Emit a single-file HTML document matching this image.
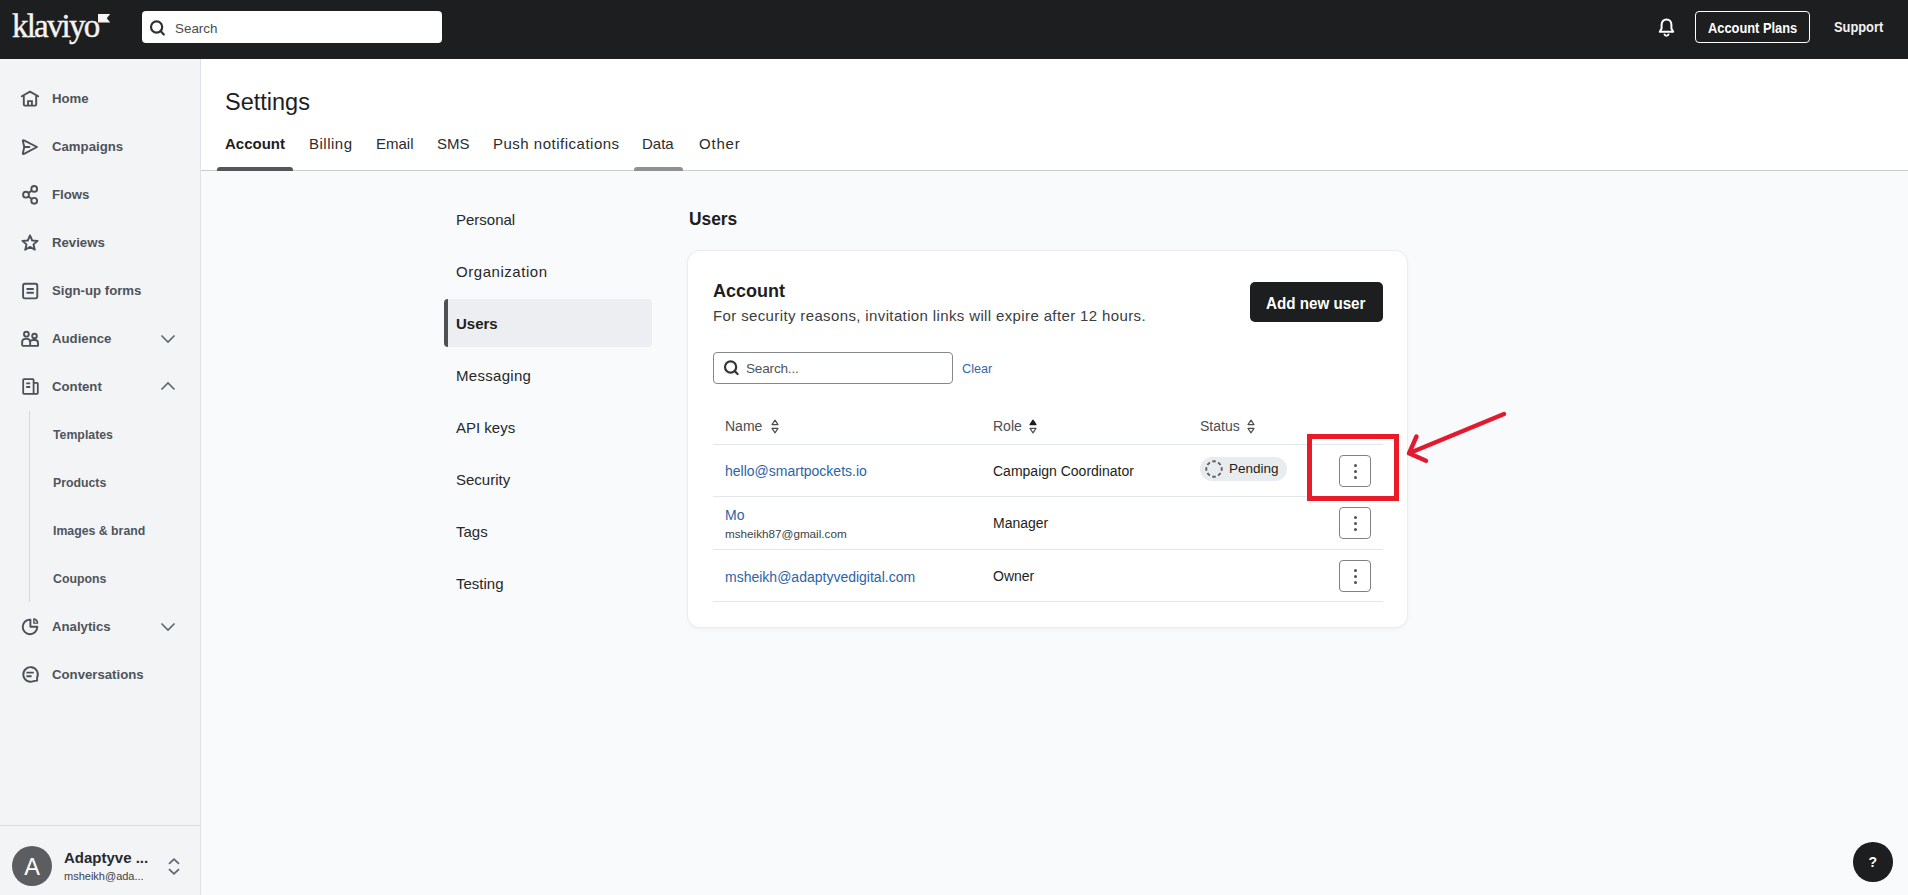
<!DOCTYPE html>
<html><head><meta charset="utf-8">
<style>
*{box-sizing:border-box;margin:0;padding:0}
html,body{width:1908px;height:895px;overflow:hidden;background:#f9fafb;font-family:"Liberation Sans",sans-serif;color:#1d1e20}
.abs{position:absolute}
#top{position:absolute;left:0;top:0;width:1908px;height:59px;background:#1d1e20}
#side{position:absolute;left:0;top:59px;width:201px;height:836px;background:#f3f4f6;border-right:1px solid #dfe1e5}
.nav{position:absolute;left:52px;font-size:13.2px;font-weight:bold;color:#4e535a;white-space:nowrap;line-height:17px}
.sub{position:absolute;left:53px;font-size:12.3px;font-weight:bold;color:#50555c;white-space:nowrap;line-height:16px}
.ico{position:absolute;left:20px;width:20px;height:20px}
#head{position:absolute;left:201px;top:59px;width:1707px;height:112px;background:#fff;border-bottom:1px solid #c9ccd1}
.tab{position:absolute;top:76px;font-size:15px;color:#2a2c2f;white-space:nowrap;line-height:18px}
.snav{position:absolute;left:456px;font-size:15px;color:#26282b;white-space:nowrap;line-height:18px}
.th{position:absolute;top:418px;font-size:14px;color:#4a4e55;line-height:16px;white-space:nowrap}
.hl{position:absolute;left:713px;width:670px;height:1px;background:#e3e6ea}
.td{position:absolute;font-size:14px;color:#1d1e20;line-height:16px;white-space:nowrap}
.link{color:#2c64a8}
.kb{position:absolute;left:1339px;width:32px;height:32px;border:1px solid #7f8185;border-radius:4px;background:#fff}
.kb i{position:absolute;left:13.5px;width:3.2px;height:3.2px;border-radius:50%;background:#505154}
</style></head>
<body>
<div id="top">
  <!-- logo -->
  <div class="abs" style="left:12px;top:6px;font-family:'Liberation Serif',serif;font-size:33px;color:#f6f4f0;letter-spacing:-1.8px;line-height:40px;font-weight:normal;-webkit-text-stroke:0.4px #f6f4f0">klaviyo</div>
  <svg class="abs" style="left:98px;top:13.5px" width="13" height="10" viewBox="0 0 13 10"><path d="M0 0H12.2L8.8 4.2L12.2 8.4H0Z" fill="#f6f4f0"/></svg>
  <!-- search -->
  <div class="abs" style="left:142px;top:11px;width:300px;height:32px;background:#fff;border-radius:4px"></div>
  <svg class="abs" style="left:148px;top:19px" width="18" height="18" viewBox="0 0 18 18"><circle cx="8.6" cy="8" r="5.6" fill="none" stroke="#2f3033" stroke-width="2.2"/><path d="M12.6 12L15.8 15.4" stroke="#2f3033" stroke-width="2.2" stroke-linecap="round"/></svg>
  <div class="abs" style="left:175px;top:21px;font-size:13.4px;color:#4a4d52;line-height:16px">Search</div>
  <!-- right -->
  <svg class="abs" style="left:1657px;top:17px" width="19" height="21" viewBox="0 0 19 21"><path d="M9.5 2.5C6.5 2.5 4.6 4.8 4.6 7.8V11.6L2.8 14.8H16.2L14.4 11.6V7.8C14.4 4.8 12.5 2.5 9.5 2.5Z" fill="none" stroke="#fff" stroke-width="2" stroke-linejoin="round"/><path d="M7.2 16.8C7.6 18.2 8.4 18.9 9.5 18.9S11.4 18.2 11.8 16.8" fill="none" stroke="#fff" stroke-width="1.8"/></svg>
  <div class="abs" style="left:1695px;top:11px;width:115px;height:32px;border:1.5px solid #fff;border-radius:4px"></div>
  <div class="abs" style="left:1708px;top:20px;font-size:14px;font-weight:bold;color:#fff;line-height:16px;white-space:nowrap;transform:scaleX(0.917);transform-origin:0 0">Account Plans</div>
  <div class="abs" style="left:1834px;top:18.5px;font-size:14px;font-weight:bold;color:#f2f2f2;line-height:16px;white-space:nowrap;transform:scaleX(0.918);transform-origin:0 0">Support</div>
</div>

<div id="side">
  <!-- home -->
  <svg class="abs" style="left:20px;top:30px" width="20" height="18" viewBox="0 0 20 18"><path d="M1.8 7.3L10 2.6L18.2 7.3M3.8 6.2V15.5Q3.8 16.6 4.9 16.6H15.1Q16.2 16.6 16.2 15.5V6.2" fill="none" stroke="#4c5057" stroke-width="1.9" stroke-linejoin="round" stroke-linecap="round"/><path d="M8.1 16.6V12.1H11.9V16.6" fill="none" stroke="#4c5057" stroke-width="1.9"/></svg>
  <div class="nav" style="top:31px">Home</div>
  <!-- campaigns -->
  <svg class="abs" style="left:20px;top:79px" width="20" height="19" viewBox="0 0 20 19"><path d="M4 2.4L17 9L4 15.8Q2.6 16.5 2.9 15L4.3 9L2.9 3.2Q2.6 1.7 4 2.4Z" fill="none" stroke="#4c5057" stroke-width="1.9" stroke-linejoin="round"/><path d="M4.3 9H9.4" stroke="#4c5057" stroke-width="1.9" stroke-linecap="round"/></svg>
  <div class="nav" style="top:79px">Campaigns</div>
  <!-- flows -->
  <svg class="abs" style="left:20px;top:124px" width="20" height="22" viewBox="0 0 20 22"><circle cx="14.2" cy="5.9" r="2.9" fill="none" stroke="#4c5057" stroke-width="1.9"/><circle cx="6" cy="11.7" r="2.9" fill="none" stroke="#4c5057" stroke-width="1.9"/><circle cx="14.2" cy="17.8" r="2.9" fill="none" stroke="#4c5057" stroke-width="1.9"/><path d="M8.4 10L11.8 7.6M8.4 13.4L11.8 16" stroke="#4c5057" stroke-width="1.9"/></svg>
  <div class="nav" style="top:127px">Flows</div>
  <!-- reviews -->
  <svg class="abs" style="left:20px;top:174px" width="20" height="20" viewBox="0 0 20 20"><path d="M10 2.4L12.2 7.5L17.6 7.9L13.5 11.4L14.8 16.7L10 13.9L5.2 16.7L6.5 11.4L2.4 7.9L7.8 7.5Z" fill="none" stroke="#4c5057" stroke-width="1.9" stroke-linejoin="round"/></svg>
  <div class="nav" style="top:175px">Reviews</div>
  <!-- signup forms -->
  <svg class="abs" style="left:20px;top:222px" width="20" height="19" viewBox="0 0 20 19"><rect x="3.1" y="2.8" width="14.2" height="14.6" rx="1.8" fill="none" stroke="#4c5057" stroke-width="1.9"/><path d="M6.5 8H13.8M6.5 11.8H13.8" stroke="#4c5057" stroke-width="1.9"/></svg>
  <div class="nav" style="top:223px">Sign-up forms</div>
  <!-- audience -->
  <svg class="abs" style="left:20px;top:270px" width="20" height="19" viewBox="0 0 20 19"><circle cx="6.4" cy="5.2" r="2.4" fill="none" stroke="#4c5057" stroke-width="1.9"/><circle cx="14.5" cy="7" r="2.3" fill="none" stroke="#4c5057" stroke-width="1.9"/><path d="M2.15 16.85H18.05V14.2Q18.05 11.05 14.9 11.05H13.3Q10.9 11.05 10.15 12.6M2.15 16.85V13Q2.15 9.85 5.3 9.85H7Q10.15 9.85 10.15 13V16.85" fill="none" stroke="#4c5057" stroke-width="1.9" stroke-linejoin="round"/></svg>
  <div class="nav" style="top:271px">Audience</div>
  <svg class="abs" style="left:160px;top:275px" width="16" height="10" viewBox="0 0 16 10"><path d="M1.5 1.5L8 8L14.5 1.5" fill="none" stroke="#5f6670" stroke-width="1.6"/></svg>
  <!-- content -->
  <svg class="abs" style="left:20px;top:318px" width="20" height="19" viewBox="0 0 20 19"><path d="M13.6 16.9H3.9Q3.2 16.9 3.2 16.1V2.9Q3.2 2.1 4 2.1H12.8Q13.6 2.1 13.6 2.9V16.9H17.1Q17.8 16.9 17.8 16.1V6.6Q17.8 5.8 17.1 5.8H13.6" fill="none" stroke="#4c5057" stroke-width="1.8" stroke-linejoin="round"/><path d="M6.2 6.3H10.2M6.2 10H10.2" stroke="#4c5057" stroke-width="1.8"/></svg>
  <div class="nav" style="top:319px">Content</div>
  <svg class="abs" style="left:160px;top:322px" width="16" height="10" viewBox="0 0 16 10"><path d="M1.5 8.5L8 2L14.5 8.5" fill="none" stroke="#5f6670" stroke-width="1.6"/></svg>
  <div class="abs" style="left:29px;top:352px;width:1px;height:191px;background:#d4d7db"></div>
  <div class="sub" style="top:368px">Templates</div>
  <div class="sub" style="top:416px">Products</div>
  <div class="sub" style="top:464px">Images &amp; brand</div>
  <div class="sub" style="top:512px">Coupons</div>
  <!-- analytics -->
  <svg class="abs" style="left:20px;top:558px" width="20" height="19" viewBox="0 0 20 19"><path d="M10.4 2.6A7.3 7.3 0 1 0 17.3 9.8H10.4Z" fill="none" stroke="#4c5057" stroke-width="1.9" stroke-linejoin="round"/><path d="M13.2 1.3V6.8H18.3Q18.3 1.3 13.2 1.3Z" fill="#4c5057"/><path d="M14.6 2.8V5.4H17" fill="#f3f4f6"/></svg>
  <div class="nav" style="top:559px">Analytics</div>
  <svg class="abs" style="left:160px;top:563px" width="16" height="10" viewBox="0 0 16 10"><path d="M1.5 1.5L8 8L14.5 1.5" fill="none" stroke="#5f6670" stroke-width="1.6"/></svg>
  <!-- conversations -->
  <svg class="abs" style="left:20px;top:606px" width="20" height="19" viewBox="0 0 20 19"><path d="M17.1 15.6L17.1 12.7A7.3 7.3 0 1 0 13.6 16.1Z" fill="none" stroke="#4c5057" stroke-width="1.9" stroke-linejoin="round"/><path d="M6.4 7.6H13.8M6.4 11.3H11.6" stroke="#4c5057" stroke-width="1.9"/></svg>
  <div class="nav" style="top:607px">Conversations</div>
  <!-- bottom account -->
  <div class="abs" style="left:0;top:766px;width:200px;height:1px;background:#d9dce0"></div>
  <div class="abs" style="left:12px;top:787px;width:40px;height:40px;border-radius:50%;background:#5c5d60;color:#fff;font-size:23.5px;line-height:42px;text-align:center">A</div>
  <div class="abs" style="left:64px;top:790px;font-size:15px;font-weight:bold;color:#26292e;line-height:18px;white-space:nowrap">Adaptyve ...</div>
  <div class="abs" style="left:64px;top:811px;font-size:11px;color:#3d4248;line-height:13px;white-space:nowrap">msheikh@ada...</div>
  <svg class="abs" style="left:166px;top:798px" width="16" height="22" viewBox="0 0 16 22"><path d="M3 6.8L8 2.2L13 6.8M3 12.2L8 16.8L13 12.2" fill="none" stroke="#5f6670" stroke-width="1.8"/></svg>
</div>

<div id="head">
  <div class="abs" style="left:24px;top:29px;font-size:23.5px;color:#1d1e20;line-height:28px">Settings</div>
  <div class="tab" style="left:24px;font-weight:bold;color:#1d1e20">Account</div>
  <div class="tab" style="left:108px;letter-spacing:0.5px">Billing</div>
  <div class="tab" style="left:175px">Email</div>
  <div class="tab" style="left:236px">SMS</div>
  <div class="tab" style="left:292px;letter-spacing:0.5px">Push notifications</div>
  <div class="tab" style="left:441px">Data</div>
  <div class="tab" style="left:498px;letter-spacing:0.8px">Other</div>
  <div class="abs" style="left:16px;top:108px;width:76px;height:4px;background:#555659;border-radius:3px 3px 0 0"></div>
  <div class="abs" style="left:433px;top:108px;width:49px;height:4px;background:#8f9091;border-radius:3px 3px 0 0"></div>
</div>
<!-- sub nav -->
<div class="snav" style="top:211px">Personal</div>
<div class="snav" style="top:263px;letter-spacing:0.55px">Organization</div>
<div class="abs" style="left:444px;top:299px;width:208px;height:48px;background:#eceef1;border-radius:4px;border-left:4px solid #4f5053"></div>
<div class="snav" style="top:315px;font-weight:bold;color:#1d1e20">Users</div>
<div class="snav" style="top:367px;letter-spacing:0.3px">Messaging</div>
<div class="snav" style="top:419px">API keys</div>
<div class="snav" style="top:471px">Security</div>
<div class="snav" style="top:523px">Tags</div>
<div class="snav" style="top:575px">Testing</div>

<div class="abs" style="left:689px;top:209px;font-size:18px;font-weight:bold;color:#1d1e20;line-height:20px;white-space:nowrap;transform:scaleX(0.965);transform-origin:0 0">Users</div>

<!-- card -->
<div class="abs" style="left:688px;top:251px;width:719px;height:376px;background:#fff;border-radius:12px;box-shadow:0 0 0 1px #eaecef,0 1px 2px rgba(0,0,0,0.05),0 2px 6px rgba(0,0,0,0.04)"></div>
<div class="abs" style="left:713px;top:280px;font-size:18px;font-weight:bold;color:#1d1e20;line-height:22px">Account</div>
<div class="abs" style="left:713px;top:307px;font-size:15px;color:#3a3d42;line-height:18px;white-space:nowrap;letter-spacing:0.37px">For security reasons, invitation links will expire after 12 hours.</div>
<div class="abs" style="left:1250px;top:282px;width:133px;height:40px;background:#1d1e20;border-radius:5px"></div>
<div class="abs" style="left:1266px;top:294.5px;font-size:16px;font-weight:bold;color:#fff;line-height:18px;white-space:nowrap;transform:scaleX(0.948);transform-origin:0 0">Add new user</div>

<div class="abs" style="left:713px;top:352px;width:240px;height:32px;border:1px solid #85888c;border-radius:4px;background:#fff"></div>
<svg class="abs" style="left:722px;top:359px" width="18" height="18" viewBox="0 0 18 18"><circle cx="8.6" cy="8" r="5.6" fill="none" stroke="#333438" stroke-width="2.2"/><path d="M12.6 12L15.6 15" stroke="#333438" stroke-width="2.2" stroke-linecap="round"/></svg>
<div class="abs" style="left:746px;top:361px;font-size:13.6px;color:#50545a;line-height:16px;letter-spacing:-0.2px">Search...</div>
<div class="abs" style="left:962px;top:361px;font-size:12.7px;color:#2f6aae;line-height:16px">Clear</div>

<!-- table -->
<div class="th" style="left:725px">Name</div>
<div class="th" style="left:993px">Role</div>
<div class="th" style="left:1200px">Status</div>
<svg class="abs" style="left:771px;top:419px" width="8" height="15" viewBox="0 0 8 15"><path d="M4 1.2L7 5.6H1Z M4 13.8L7 9.4H1Z" fill="none" stroke="#4b4d50" stroke-width="1.2" stroke-linejoin="round"/></svg>
<svg class="abs" style="left:1029px;top:419px" width="8" height="15" viewBox="0 0 8 15"><path d="M4 1.2L7 5.6H1Z" fill="#1d1e20" stroke="#1d1e20" stroke-width="1.2" stroke-linejoin="round"/><path d="M4 13.8L7 9.4H1Z" fill="none" stroke="#4b4d50" stroke-width="1.2" stroke-linejoin="round"/></svg>
<svg class="abs" style="left:1247px;top:419px" width="8" height="15" viewBox="0 0 8 15"><path d="M4 1.2L7 5.6H1Z M4 13.8L7 9.4H1Z" fill="none" stroke="#4b4d50" stroke-width="1.2" stroke-linejoin="round"/></svg>
<div class="hl" style="top:444px"></div>
<div class="hl" style="top:496px"></div>
<div class="hl" style="top:549px"></div>
<div class="hl" style="top:601px"></div>

<div class="td link" style="left:725px;top:463px">hello@smartpockets.io</div>
<div class="td" style="left:993px;top:463px">Campaign Coordinator</div>
<div class="abs" style="left:1200px;top:457px;width:87px;height:24px;border-radius:12px;background:#e9ecef"></div>
<svg class="abs" style="left:1204px;top:459px" width="20" height="20" viewBox="0 0 20 20"><circle cx="10" cy="10" r="7.7" fill="none" stroke="#5b5e63" stroke-width="1.9" pathLength="48" stroke-dasharray="3.5 2.5" stroke-dashoffset="1.75"/></svg>
<div class="abs" style="left:1229px;top:461px;font-size:13.5px;color:#1d1e20;line-height:16px">Pending</div>

<div class="td link" style="left:725px;top:507px">Mo</div>
<div class="abs" style="left:725px;top:526.5px;font-size:11.7px;color:#3b3f45;line-height:13px;white-space:nowrap">msheikh87@gmail.com</div>
<div class="td" style="left:993px;top:515px">Manager</div>

<div class="td link" style="left:725px;top:569px">msheikh@adaptyvedigital.com</div>
<div class="td" style="left:993px;top:568px">Owner</div>

<div class="kb" style="top:455px"><i style="top:8px"></i><i style="top:14px"></i><i style="top:20px"></i></div>
<div class="kb" style="top:507px"><i style="top:8px"></i><i style="top:14px"></i><i style="top:20px"></i></div>
<div class="kb" style="top:560px"><i style="top:8px"></i><i style="top:14px"></i><i style="top:20px"></i></div>

<!-- annotation -->
<div class="abs" style="left:1307px;top:434px;width:92px;height:67px;border:5px solid #e81c28"></div>
<svg class="abs" style="left:1400px;top:405px" width="115" height="65" viewBox="1400 405 115 65"><path d="M1504 414L1409 453.3M1416.5 436.5L1409 453.3L1426 460.8" fill="none" stroke="#e3192e" stroke-width="4.4" stroke-linecap="round" stroke-linejoin="round"/></svg>

<!-- help -->
<div class="abs" style="left:1853px;top:842px;width:39.5px;height:39.5px;border-radius:50%;background:#1d1e20;color:#fff;font-size:14px;font-weight:bold;line-height:40px;text-align:center">?</div>
</body></html>
